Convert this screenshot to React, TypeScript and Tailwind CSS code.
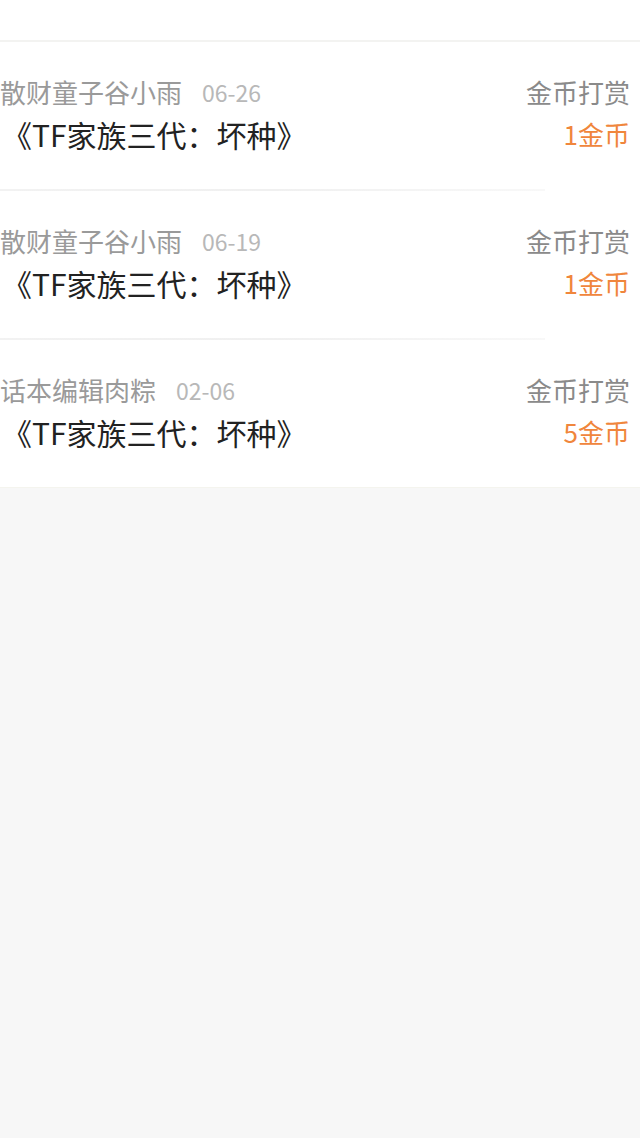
import React from "react";

const rows = [
  { name: "散财童子谷小雨", date: "06-26", amount: "1金币" },
  { name: "散财童子谷小雨", date: "06-19", amount: "1金币" },
  { name: "话本编辑肉粽", date: "02-06", amount: "5金币" },
];

export default function App() {
  return (
    <div
      className="w-[640px] h-[1138px] bg-[#f7f7f7] overflow-hidden"
      style={{ fontFamily: '"Noto Sans CJK SC", "Noto Sans", sans-serif' }}
    >
      <div className="bg-white">
        <div className="h-[40px]" />
        <div className="h-[2px] bg-[#f3f3f1]" />
        {rows.map((r, i) => (
          <div key={i}>
            <div className="h-[147px] flex items-center justify-between pr-[10px] pb-[2px]">
              <div className="flex flex-col gap-[6px]">
                <div className="flex items-center h-[32px] leading-[32px]">
                  <span className="text-[26px] text-[#9a9a9a]">{r.name}</span>
                  <span className="text-[23px] text-[#b8b8b8] ml-[20px]">{r.date}</span>
                </div>
                <div className="h-[40px] leading-[40px] text-[30px] text-[#222222] pl-[2px]">
                  《TF家族三代：坏种》
                </div>
              </div>
              <div className="flex flex-col items-end gap-[6px]">
                <div className="h-[32px] leading-[32px] text-[26px] text-[#8a8a8a]">金币打赏</div>
                <div className="h-[40px] leading-[40px] text-[26px] text-[#f0863c]">{r.amount}</div>
              </div>
            </div>
            {i < rows.length - 1 ? (
              <div className="h-[2px] w-[545px] bg-gradient-to-r from-[#f2f2f2] via-[#f0f0f0] to-[#f8f8f8]" />
            ) : (
              <div className="h-[1px] bg-[#f4f4ee]" />
            )}
          </div>
        ))}
      </div>
    </div>
  );
}
